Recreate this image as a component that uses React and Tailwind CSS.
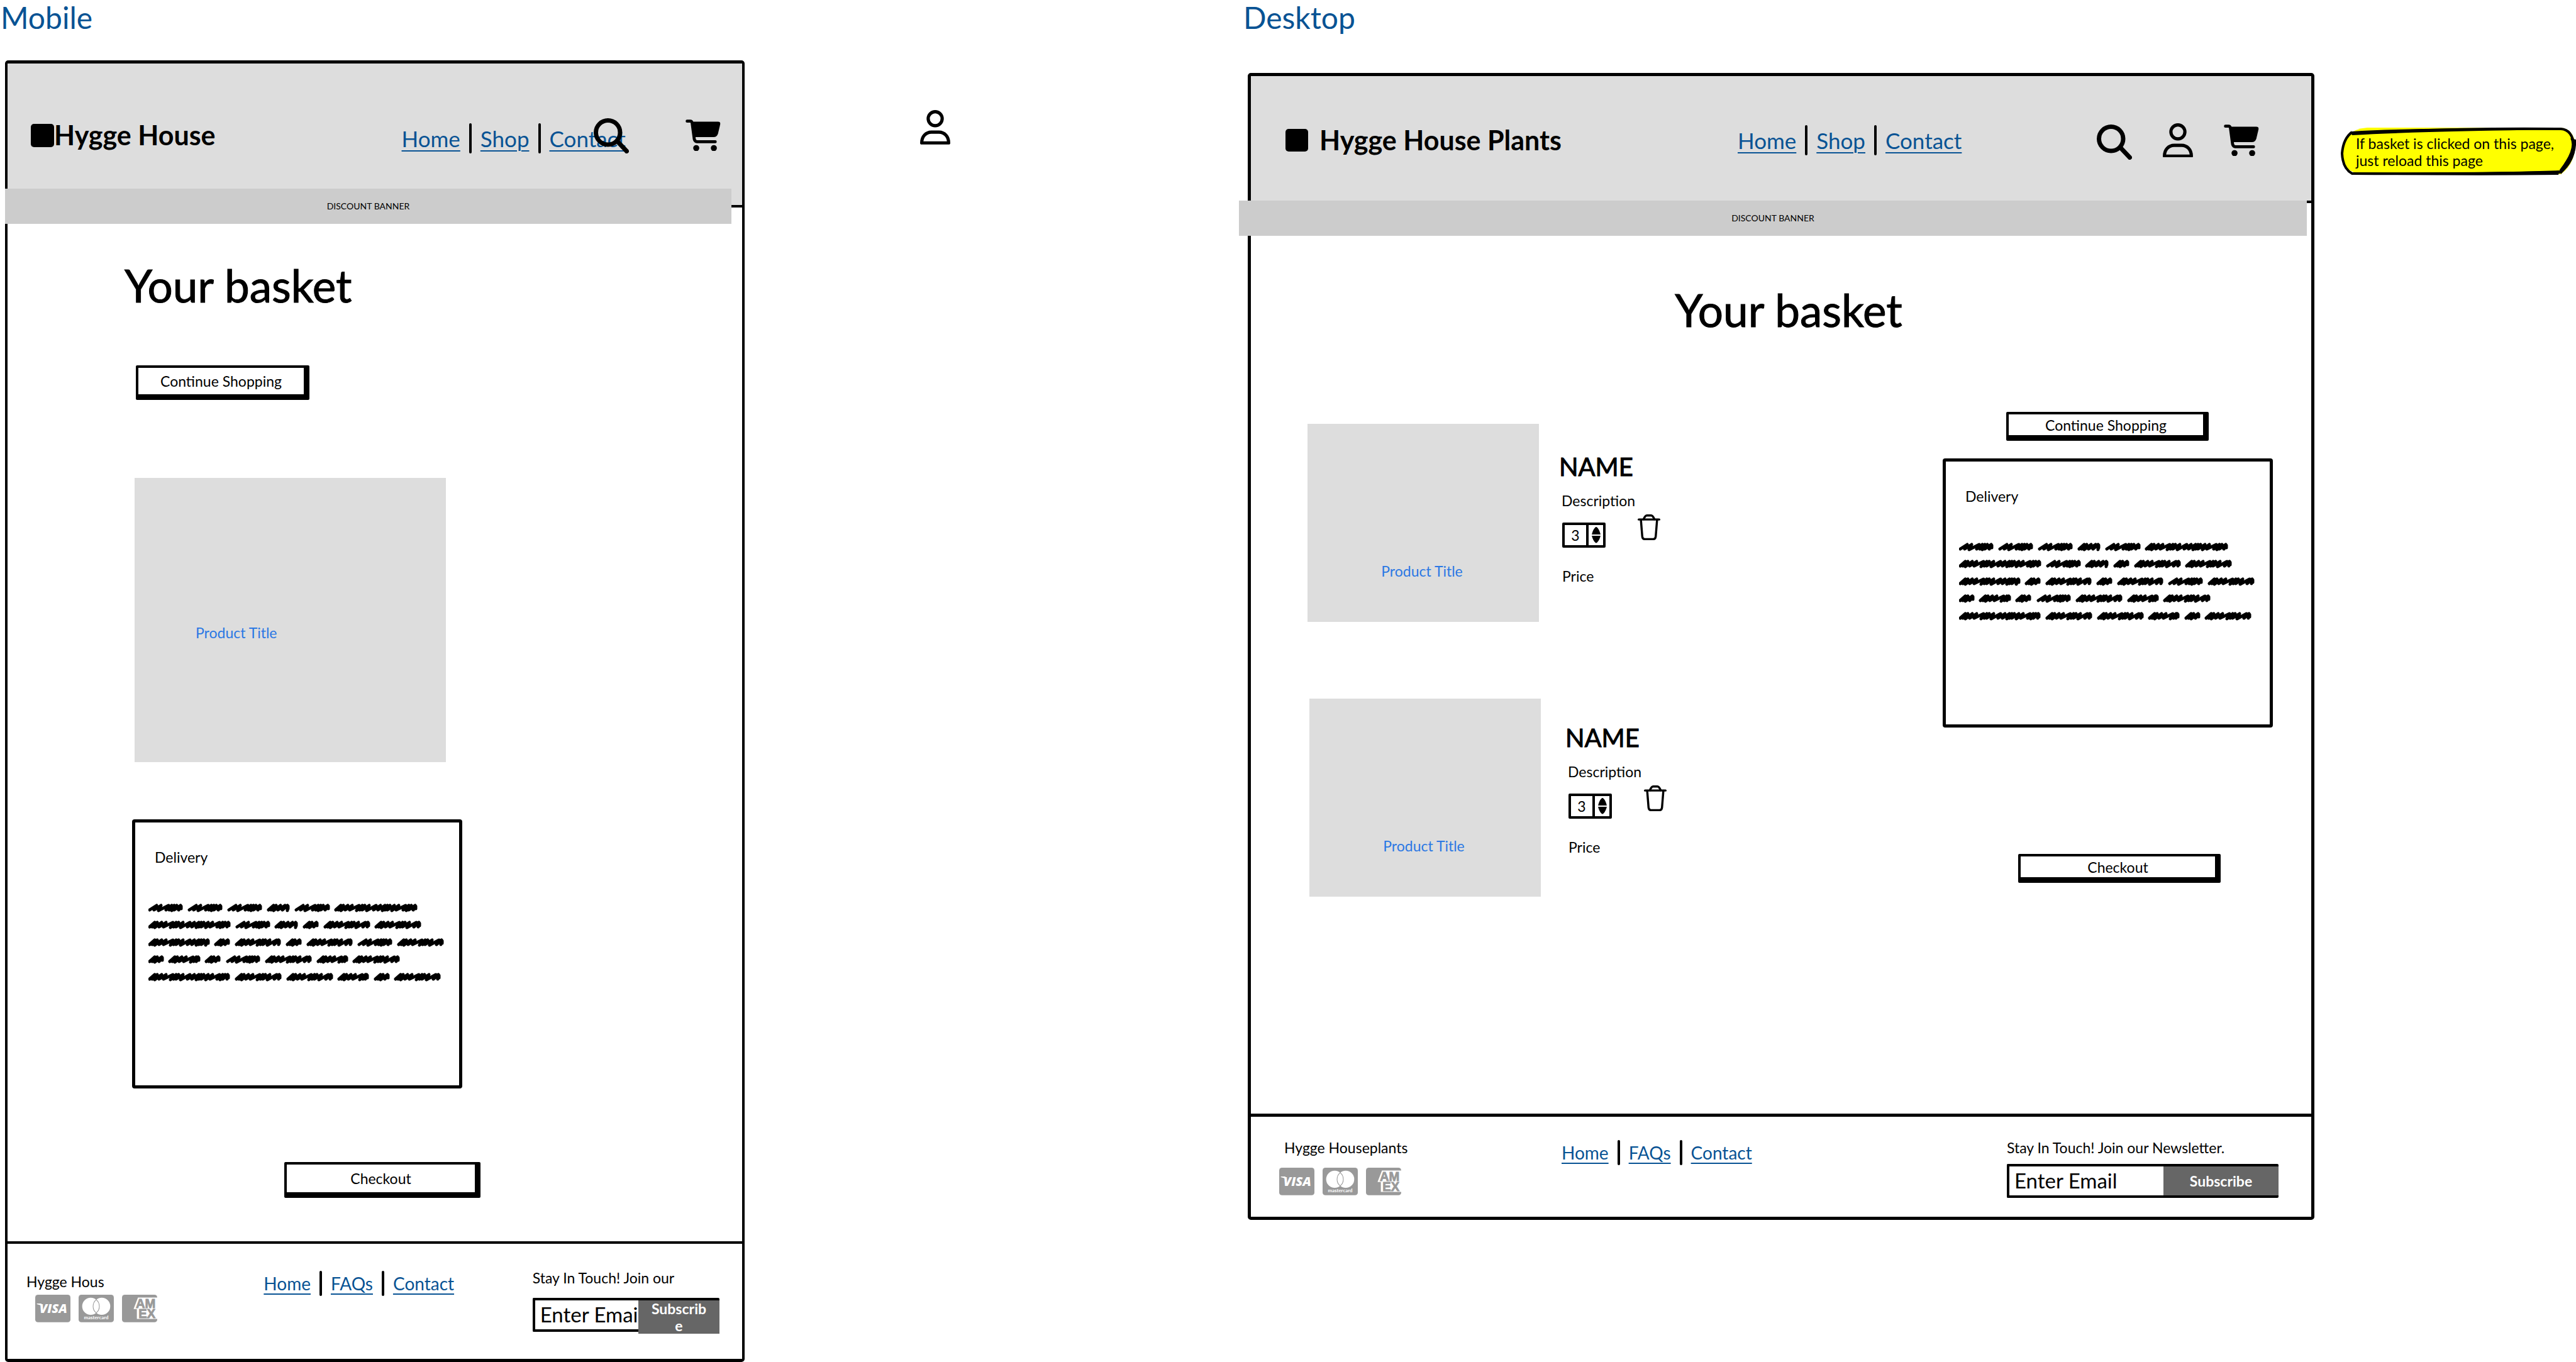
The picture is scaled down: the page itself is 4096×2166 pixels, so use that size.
import React from "react";

const SCRIBBLE_ROWS = [
  [[0, 55], [63, 118], [126, 181], [189, 225], [233, 289], [296, 428]],
  [[0, 131], [139, 194], [201, 238], [246, 271], [279, 353], [360, 434]],
  [[0, 98], [105, 130], [138, 211], [219, 244], [252, 325], [333, 388], [396, 470]],
  [[0, 25], [32, 83], [90, 115], [124, 178], [186, 260], [268, 318], [325, 400]],
  [[0, 130], [138, 212], [220, 294], [301, 351], [359, 384], [391, 465]],
];

const STROKES = {
  tight: [4, 4, 7, 7, 11, 5, 4, 7, 11, 7, 7],
  open: [7, 7, 12, 5, 4, 4, 7, 6],
};

function wordPath([x1, x2], y) {
  const steps = x2 - x1 < 60 && x2 - x1 > 52 ? STROKES.open : STROKES.tight;
  let x = x1 + 2;
  let d = `M${x} ${y + 3}`;
  let i = 0;
  while (x + 6 < x2 - 3) {
    const step = steps[i % steps.length];
    const top = Math.min(x + step + 4, x2 - 4);
    const bottom = Math.min(x + step, x2 - 4);
    d += ` L${top} ${y - 4} L${bottom} ${y + 3 + (i % 3 === 1 ? 1 : 0)}`;
    x += step;
    i += 1;
  }
  return `${d} L${x2 - 3} ${y - 3} L${x2 - 3} ${y + 1}`;
}

function Scribble() {
  return (
    <svg viewBox="0 0 472 126" className="block w-[472px]" role="img" aria-label="Delivery details">
      {SCRIBBLE_ROWS.map((row, r) => (
        <path
          key={r}
          d={row.map((word) => wordPath(word, 9 + Math.round(r * 27.4))).join(" ")}
          fill="none"
          stroke="black"
          strokeWidth="5"
          strokeLinecap="round"
          strokeLinejoin="round"
        />
      ))}
    </svg>
  );
}

function SearchIcon() {
  return (
    <svg viewBox="0 0 64 64" className="block w-14" fill="none" stroke="black" strokeWidth="8" strokeLinecap="round">
      <circle cx="26" cy="26" r="22" />
      <path d="M43 42 L60 60" />
    </svg>
  );
}

function PersonIcon() {
  return (
    <svg viewBox="0 0 56 64" className="block w-12" fill="none" stroke="black" strokeWidth="6" strokeLinejoin="round">
      <circle cx="28" cy="16" r="13" />
      <path d="M3 61 C3 49 11 41 21 41 H35 C45 41 53 49 53 61 Z" />
    </svg>
  );
}

function CartIcon() {
  return (
    <svg viewBox="0 0 64 58" className="block w-14">
      <path d="M3 3 H9 Q11 3 12 6 L16 36 Q17 40 21 40.500 H54" fill="none" stroke="black" strokeWidth="5.500" strokeLinecap="round" />
      <path d="M10 4 H59 Q64 4 63 9 L59 26 Q57 32 51 32 H16 Z" fill="black" />
      <circle cx="19.500" cy="52" r="5.500" />
      <circle cx="51.500" cy="52" r="5.500" />
    </svg>
  );
}

function TrashIcon() {
  return (
    <svg viewBox="0 0 42 48" className="block w-9" fill="none" stroke="black" strokeWidth="4" strokeLinecap="round" strokeLinejoin="round">
      <path d="M2 9.500 H40" />
      <path d="M11 9 Q14 2 17 2 H25 Q28 2 31 9" />
      <path d="M6 10 L8.500 41 Q9 46 13 46 H29 Q33 46 33.500 41 L36 10" />
    </svg>
  );
}

function PaymentCards({ className }) {
  return (
    <div className={`flex gap-[13px] ${className}`}>
      <svg viewBox="0 0 64 50" className="block w-14" role="img" aria-label="Visa">
        <rect width="64" height="50" rx="5" fill="#999" />
        <text x="33" y="33" textAnchor="middle" fontFamily="Open Sans, sans-serif" fontWeight="800" fontStyle="italic" fontSize="23" fill="white">VISA</text>
        <path d="M3 16 H11 L14 22 Q9 18 3 17 Z" fill="white" />
      </svg>
      <svg viewBox="0 0 64 50" className="block w-14" role="img" aria-label="Mastercard">
        <rect width="64" height="50" rx="5" fill="#999" />
        <circle cx="22" cy="21" r="15.500" fill="white" />
        <circle cx="42" cy="21" r="15.500" fill="white" />
        <path d="M32 9 A15.500 15.500 0 0 0 32 33 A15.500 15.500 0 0 0 32 9 Z" fill="none" stroke="#999" strokeWidth="1.200" />
        <text x="32" y="44" textAnchor="middle" fontFamily="Lato, sans-serif" fontWeight="700" fontSize="9" fill="white">mastercard</text>
      </svg>
      <svg viewBox="0 0 64 50" className="block w-14" role="img" aria-label="American Express">
        <rect width="64" height="50" rx="5" fill="#999" />
        <path d="M29 5 H64 V44 H27 V26 H21 Z" fill="white" />
        <g fontFamily="Liberation Sans, sans-serif" fontWeight="700" fontSize="23" fill="#999" stroke="#999" strokeWidth="1">
          <text x="25" y="24">AM</text>
          <text x="30" y="42">EX</text>
        </g>
      </svg>
    </div>
  );
}

function LinkRow({ links, label, className, rule }) {
  return (
    <nav aria-label={label} className={`flex items-center text-[#085394] ${className}`}>
      {links.map((text, i) => (
        <React.Fragment key={text}>
          {i > 0 && <span className={`mx-[14px] w-1 shrink-0 rounded-full bg-black ${rule}`} />}
          <a href={`#${text}`} className="underline decoration-2 underline-offset-[5px]">{text}</a>
        </React.Fragment>
      ))}
    </nav>
  );
}

function SketchButton({ className, children }) {
  return (
    <button type="button" className={`block rounded-[2px] border-4 border-r-[9px] border-b-[9px] border-black bg-white text-center text-[23px] ${className}`}>
      {children}
    </button>
  );
}

function DeliveryBox({ className }) {
  return (
    <section className={`h-[428px] w-[525px] rounded-[4px] border-[5px] border-black bg-white pt-[41px] ${className}`}>
      <h2 className="pl-[31px] text-[23px] leading-7">Delivery</h2>
      <div className="mt-[58px] pl-[21px]">
        <Scribble />
      </div>
    </section>
  );
}

function Newsletter({ id, text, className, gap, button }) {
  return (
    <form className={className} onSubmit={(e) => e.preventDefault()}>
      <label htmlFor={id} className="block text-[23px] leading-7 whitespace-nowrap">{text}</label>
      <div className={`flex h-[54px] rounded-[2px] border-y-4 border-l-4 border-black ${gap}`}>
        <input id={id} type="email" placeholder="Enter Email" className="w-0 min-w-0 flex-1 bg-white pl-2 text-[33px] text-black outline-none placeholder:text-black placeholder:opacity-100" />
        <button type="submit" className={`shrink-0 bg-[#666] text-center text-[23px] leading-[27px] font-bold text-white ${button}`}>Subscribe</button>
      </div>
    </form>
  );
}

function BasketItem({ id, className, details }) {
  return (
    <li className={`flex items-start ${className}`}>
      <div className="flex h-[315px] w-[368px] items-end justify-center bg-[#ddd] pr-1 pb-[67px] text-[23px] leading-7 text-[#2b78e4]">
        Product Title
      </div>
      <div className={details}>
        <h2 className="text-[40px] leading-10 [-webkit-text-stroke:1px_black]">NAME</h2>
        <p className="mt-5 pl-1 text-[23px] leading-7">Description</p>
        <div className="mt-2 flex items-start pl-[5px]">
          <div className="mt-[13px] flex h-10 w-[69px] rounded-[2px] border-4 border-black">
            <input id={id} aria-label="Quantity" inputMode="numeric" defaultValue="3" className="min-w-0 flex-1 bg-white text-center text-[23px] outline-none" />
            <div className="flex w-[27px] flex-col items-center justify-center gap-[2px] border-l-4 border-black">
              <button type="button" aria-label="Increase quantity" className="block">
                <svg viewBox="0 0 16 14" className="block w-[14px]"><path d="M0 14 Q2 5 6 1 Q8 -1 10 1 Q14 5 16 14 Z" /></svg>
              </button>
              <button type="button" aria-label="Decrease quantity" className="block">
                <svg viewBox="0 0 16 13" className="block w-[14px]"><path d="M0 0 H16 Q14 8 10 12 Q8 14 6 12 Q2 8 0 0 Z" /></svg>
              </button>
            </div>
          </div>
          <button type="button" aria-label="Remove item" className="ml-[51px]"><TrashIcon /></button>
        </div>
        <p className="mt-[31px] pl-[5px] text-[23px] leading-7">Price</p>
      </div>
    </li>
  );
}

function MobileScreen() {
  return (
    <section className="flex flex-col pl-2">
      <h2 className="-ml-2 pl-px text-[48px] leading-[56px] text-[#085394]">Mobile</h2>
      <div className="mt-10 flex flex-1 flex-col rounded-[5px] border-x-4 border-y-[5px] border-black">
        <header className="grid grid-cols-[626fr_451fr_90fr] items-center border-b-4 border-black bg-[#ddd] pt-[90px] pb-[87px]">
          <div className="flex h-12 items-center pl-[37px]">
            <span className="size-[37px] rounded-[5px] bg-black" />
            <span className="text-[43px] leading-[48px] font-bold whitespace-nowrap">Hygge House</span>
          </div>
          <div className="relative mt-[5px] -mb-[5px]">
            <LinkRow label="Mobile main" links={["Home", "Shop", "Contact"]} className="text-[35px] leading-9" rule="h-12" />
            <button type="button" aria-label="Search" className="absolute -top-2 left-[305px]"><SearchIcon /></button>
          </div>
          <button type="button" aria-label="Basket" className="-my-1 justify-self-start"><CartIcon /></button>
        </header>
        <div className="relative -mt-[30px] mr-[17px] -ml-1 bg-[#ccc] text-center text-[14px] leading-[56px]">DISCOUNT BANNER</div>
        <main className="flex-1 pt-[58px] pl-[198px]">
          <h1 className="-ml-3 text-[71px] leading-20 [-webkit-text-stroke:1px_black]">Your basket</h1>
          <SketchButton className="mt-[87px] ml-[6px] h-[55px] w-[276px]">Continue Shopping</SketchButton>
          <div className="mt-[124px] ml-1 flex h-[452px] w-[495px] items-end bg-[#ddd] pb-[192px] pl-[97px] text-[23px] leading-7 text-[#2b78e4]">
            Product Title
          </div>
          <DeliveryBox className="mt-[91px]" />
          <SketchButton className="mt-[117px] ml-[242px] h-[57px] w-[312px]">Checkout</SketchButton>
        </main>
        <footer className="grid grid-cols-[407fr_427fr_333fr] items-start border-t-4 border-black pb-[43px]">
          <div className="pt-[46px] pl-[30px]">
            <p className="text-[23px] leading-7">Hygge Hous</p>
            <PaymentCards className="mt-[7px] ml-[14px]" />
          </div>
          <LinkRow label="Mobile footer" links={["Home", "FAQs", "Contact"]} className="mt-[43px] text-[28px] leading-8" rule="h-10" />
          <Newsletter id="mobile-email" text="Stay In Touch! Join our" className="mr-[36px] pt-[40px]" gap="mt-[18px]" button="-mb-[7px] w-[129px] px-[18px] break-all" />
        </footer>
      </div>
    </section>
  );
}

function DesktopScreen() {
  return (
    <section>
      <h2 className="pl-[7px] text-[48px] leading-[56px] text-[#085394]">Desktop</h2>
      <div className="mt-[60px] ml-[14px] rounded-[5px] border-x-[5px] border-y-[5px] border-black">
        <header className="grid grid-cols-[774fr_571fr_341fr] items-center border-b-4 border-black bg-[#ddd] pt-[78px] pb-[72px]">
          <div className="flex h-12 items-center pl-[55px]">
            <span className="size-9 rounded-[5px] bg-black" />
            <span className="ml-[18px] text-[43px] leading-[48px] font-bold whitespace-nowrap">Hygge House Plants</span>
          </div>
          <LinkRow label="Main" links={["Home", "Shop", "Contact"]} className="text-[35px] leading-9" rule="h-12" />
          <div className="-my-4 flex items-center gap-[49px]">
            <button type="button" aria-label="Search" className="pt-[6px]"><SearchIcon /></button>
            <button type="button" aria-label="Account"><PersonIcon /></button>
            <button type="button" aria-label="Basket"><CartIcon /></button>
          </div>
        </header>
        <div className="relative -mt-1 mr-[7px] -ml-[19px] bg-[#ccc] text-center text-[14px] leading-[56px]">DISCOUNT BANNER</div>
        <main className="pt-[78px] pb-[345px]">
          <h1 className="pl-6 text-center text-[71px] leading-20 [-webkit-text-stroke:1px_black]">Your basket</h1>
          <div className="mt-[122px] flex items-start justify-between pr-[61px] pl-[90px]">
            <ul className="flex flex-col gap-[122px] pt-[19px]">
              <BasketItem id="quantity-1" details="mt-[48px] ml-[32px]" />
              <BasketItem id="quantity-2" className="ml-[3px]" details="mt-[42px] ml-[39px]" />
            </ul>
            <aside>
              <SketchButton className="ml-[101px] h-[46px] w-[322px] leading-6">Continue Shopping</SketchButton>
              <DeliveryBox className="mt-7" />
              <SketchButton className="mt-[201px] ml-[120px] h-[46px] w-[322px] leading-6">Checkout</SketchButton>
            </aside>
          </div>
        </main>
        <footer className="grid grid-cols-[494fr_708fr_484fr] items-start border-t-[5px] border-black pb-[30px]">
          <div className="pt-[35px] pl-[45px]">
            <p className="pl-2 text-[23px] leading-7">Hygge Houseplants</p>
            <PaymentCards className="mt-[18px]" />
          </div>
          <LinkRow label="Footer" links={["Home", "FAQs", "Contact"]} className="mt-[37px] text-[28px] leading-8" rule="h-10" />
          <Newsletter id="desktop-email" text="Stay In Touch! Join our Newsletter." className="mr-[52px] pt-[35px]" gap="mt-3" button="w-[183px]" />
        </footer>
      </div>
    </section>
  );
}

function StickyNote() {
  return (
    <aside className="relative mt-[202px] ml-[42px] h-[77px] pt-[13px] pl-[24px] text-[23px] leading-[27px] whitespace-nowrap">
      <svg viewBox="0 0 374 77" preserveAspectRatio="none" className="absolute inset-0 size-full" aria-hidden="true">
        <path d="M42 1 H348 Q371 2 373 30 Q371 60 350 75 H40 Q4 75 1 44 Q2 4 42 1 Z" fill="#ff0" />
        <path d="M16 10 Q190 1 350 3 Q368 4 371 30 Q369 58 348 72 Q190 75 18 74 Q3 66 2 42 Q4 18 18 8" fill="none" stroke="black" strokeWidth="4" />
        <path d="M18 7 Q120 1 350 2 L350 4 Q120 7 18 13 Z M18 72 Q190 74 348 69 L346 76 Q190 78 18 75 Z M365 18 Q374 34 348 68 L350 75 Q376 50 374 20 Z" />
      </svg>
      <p className="relative">If basket is clicked on this page,<br />just reload this page</p>
    </aside>
  );
}

export default function App() {
  return (
    <div className="grid min-h-screen grid-cols-[1184fr_786fr_1710fr_416fr] bg-white font-['Lato',sans-serif] text-black">
      <MobileScreen />
      <div className="pt-[175px] pl-[279px]">
        <button type="button" aria-label="Account"><PersonIcon /></button>
      </div>
      <DesktopScreen />
      <StickyNote />
    </div>
  );
}
